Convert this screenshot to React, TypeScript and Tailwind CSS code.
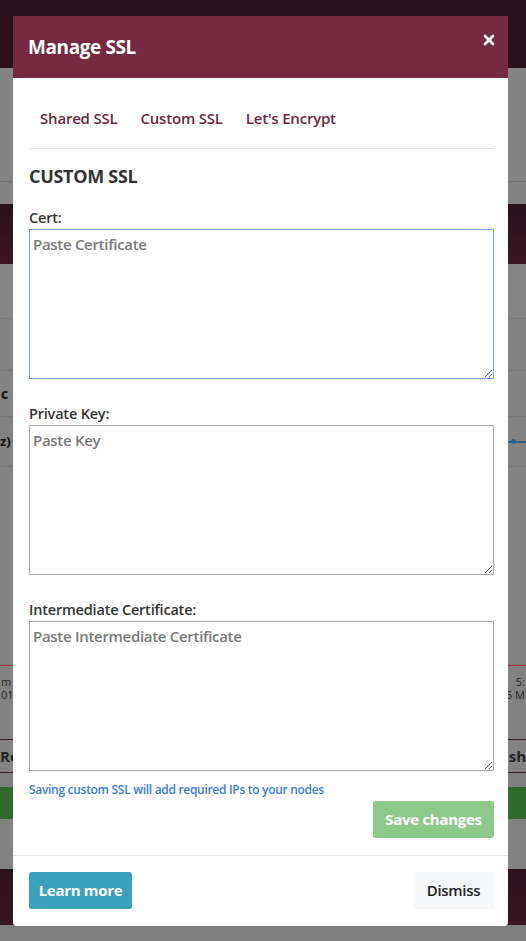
import React from "react";

const font = { fontFamily: '"Open Sans", "Noto Sans", sans-serif' };

function Field({ label, placeholder, focused, mt }: { label: string; placeholder: string; focused?: boolean; mt: string }) {
  return (
    <div className={`flex flex-col ${mt}`}>
      <label className="text-[14.5px] font-semibold text-[#333] leading-[18px] tracking-[-0.2px]">{label}</label>
      <textarea
        autoFocus={focused}
        placeholder={placeholder}
        className={`mt-[2px] h-[150px] w-full px-[3px] pt-[4px] text-[15px] font-semibold leading-[20px] tracking-[-0.3px] text-[#333] placeholder:text-[#7a7a7a] outline-none border ${
          focused ? "border-[#7f9fe0]" : "border-[#a9a9a9]"
        }`}
      />
    </div>
  );
}

export default function App() {
  return (
    <div className="relative w-[526px] h-[941px] overflow-hidden" style={font}>
      {/* background page (dimmed) */}
      <div className="flex flex-col w-full h-full bg-[#808080]">
        <div className="h-[68px] bg-[#2a111c]" />
        <div className="h-[114px] bg-[#838383] border-b border-[#747474]" />
        <div className="h-[22px] bg-[#828282]" />
        <div className="h-[60px] bg-gradient-to-b from-[#28101b] to-[#3b1622]" />
        <div className="h-[55px] bg-[#858585] border-b border-[#7a7a7a]" />
        <div className="h-[52px] bg-[#828282] border-b border-[#777]" />
        <div className="h-[46px] bg-[#838383] border-b border-[#777] flex items-center">
          <span className="text-[14px] font-bold text-[#111] ml-[1px]">c</span>
        </div>
        <div className="h-[50px] bg-[#828282] border-b border-[#777] flex items-center justify-between">
          <span className="text-[13px] font-bold text-[#111]">z)</span>
          <div className="flex items-center">
            <div className="w-[3px] h-[2px] bg-[#2a5f8a]" />
            <div className="w-[5px] h-[5px] rounded-full bg-[#2a5f8a]" />
            <div className="w-[10px] h-[2px] bg-[#2a5f8a]" />
          </div>
        </div>
        <div className="h-[198px] bg-[#838383] border-b border-[#777]" />
        <div className="h-[74px] bg-[#828282] border-t border-[#a33a3a] flex items-start pt-[9px] justify-between text-[11px] leading-[13px] text-[#222]">
          <div className="ml-[1px]"><div>m</div><div>01</div></div>
          <div className="text-right mr-[1px]"><div>5:</div><div>5 M</div></div>
        </div>
        <div className="h-[34px] bg-[#838383] border-y border-[#3a1a22] flex items-center justify-between text-[15px] font-bold text-[#222]">
          <span>Re</span>
          <span>sh</span>
        </div>
        <div className="h-[32px] bg-[#2f6a2c] mt-[14px]" />
        <div className="h-[50px] bg-[#828282]" />
        <div className="h-[56px] bg-gradient-to-b from-[#2b111c] to-[#3a1421]" />
        <div className="flex-1 bg-[#7f7f7f]" />
      </div>

      {/* modal */}
      <div className="absolute left-[13px] top-[16px] w-[495px] h-[910px] bg-white rounded-b-[4px] flex flex-col">
        <div className="h-[62px] bg-[#752a41] flex items-center justify-between pl-[15px] pr-[13px]">
          <h1 className="text-[19px] font-bold text-white tracking-[-0.4px]">Manage SSL</h1>
          <svg width="12" height="12" viewBox="0 0 12 12" className="-mt-[14px]">
            <path d="M2 2 L10 10 M10 2 L2 10" stroke="white" strokeWidth="2.8" strokeLinecap="round" />
          </svg>
        </div>
        <div className="flex flex-col pl-[16px] pr-[14px]">
          <div className="flex gap-[23px] pl-[11px] pt-[29px] pb-[19px] border-b border-[#e2e2e2] text-[15px] font-semibold text-[#6d2841] tracking-[-0.2px] leading-[22px]">
            <span>Shared SSL</span>
            <span>Custom SSL</span>
            <span>Let's Encrypt</span>
          </div>
          <h2 className="mt-[15px] text-[18px] font-bold text-[#333] leading-[24px] tracking-[-0.3px]">CUSTOM SSL</h2>
          <Field label="Cert:" placeholder="Paste Certificate" focused mt="mt-[21px]" />
          <Field label="Private Key:" placeholder="Paste Key" mt="mt-[26px]" />
          <Field label="Intermediate Certificate:" placeholder="Paste Intermediate Certificate" mt="mt-[26px]" />
          <p className="mt-[12px] text-[12px] font-semibold text-[#3a7de0] leading-[14px] tracking-[-0.3px]">
            Saving custom SSL will add required IPs to your nodes
          </p>
          <div className="flex justify-end mt-[4px]">
            <button className="w-[121px] h-[37px] rounded-[3px] bg-[#8cc98a] text-white text-[15px] font-bold tracking-[-0.3px]">
              Save changes
            </button>
          </div>
        </div>
        <div className="mt-[17px] border-t border-[#e4e4e4] flex justify-between items-center pl-[16px] pr-[14px] pt-[16px]">
          <button className="w-[103px] h-[37px] rounded-[3px] bg-[#3aa1bc] text-white text-[15px] font-bold tracking-[-0.3px]">
            Learn more
          </button>
          <button className="w-[81px] h-[37px] rounded-[3px] bg-[#f6f7f9] text-[#222] text-[15px] font-semibold tracking-[-0.3px]">
            Dismiss
          </button>
        </div>
      </div>
    </div>
  );
}
